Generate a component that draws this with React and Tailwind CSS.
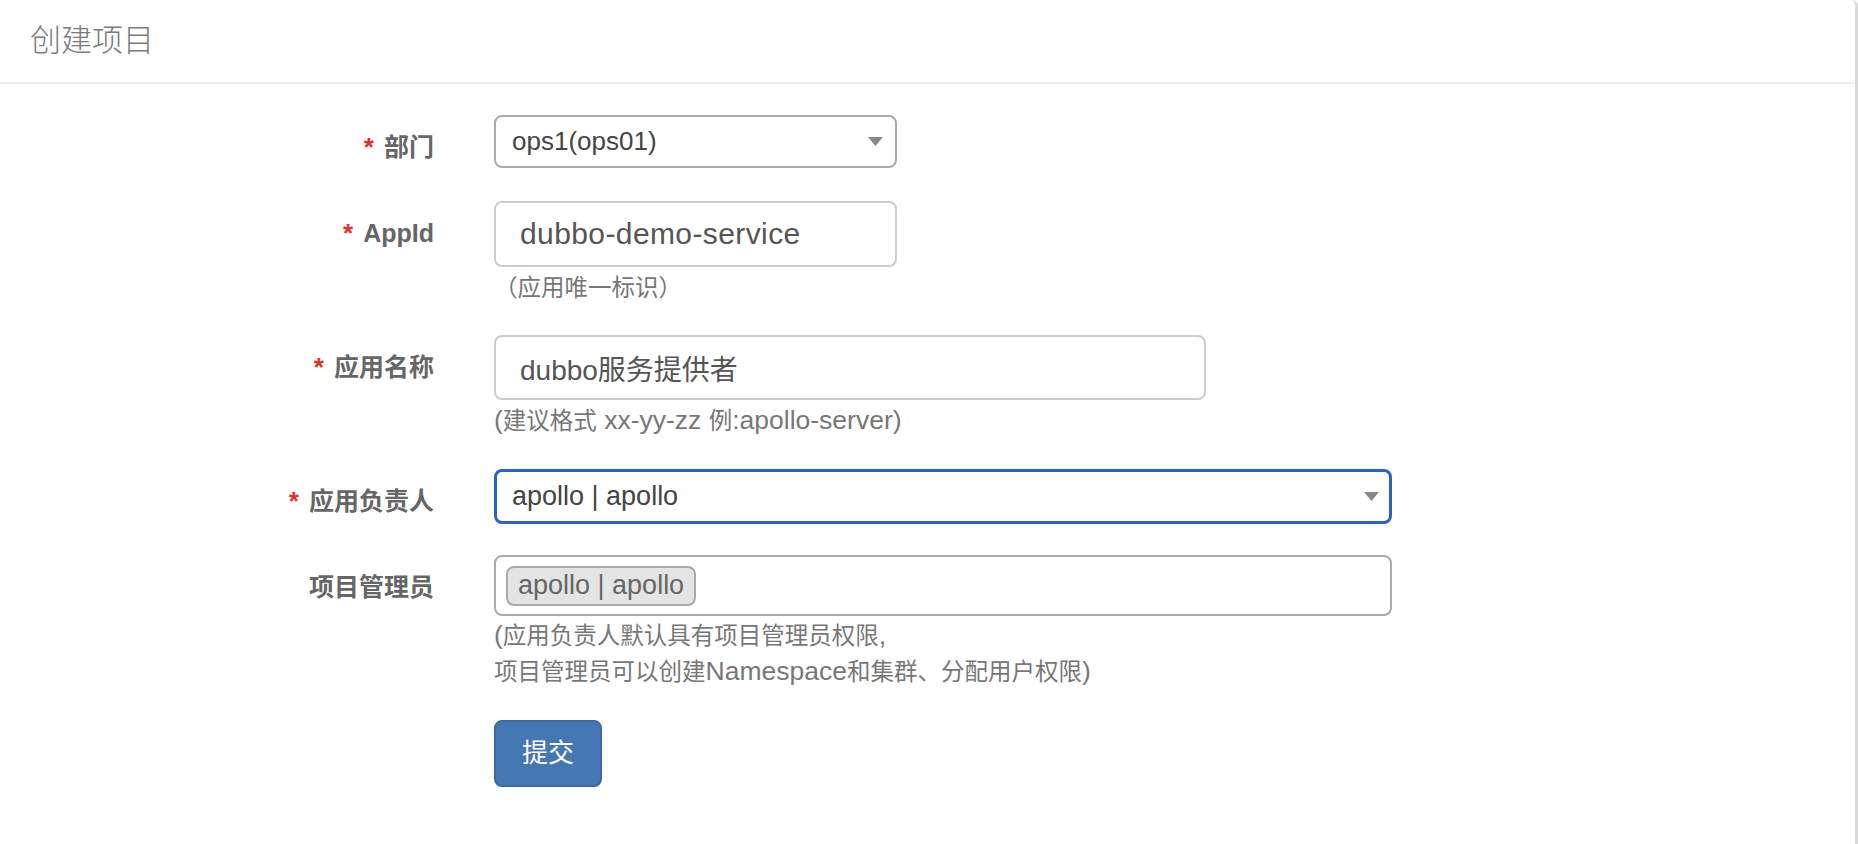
import React from 'react';

const Caret = ({ className }) => (
  <svg className={className} width="15" height="9" viewBox="0 0 15 9">
    <path d="M0 0 H15 L7.5 9 Z" fill="#888888" />
  </svg>
);

const Label = ({ required, children }) => (
  <div className="w-[434px] shrink-0 pt-[14px] text-right text-[25px] leading-[36px] font-bold text-[#666666]">
    {required && <span className="mr-[10px] text-[26px] font-bold text-[#e0302a]">*</span>}
    {children}
  </div>
);

const Hint = ({ children, className = '' }) => (
  <div className={`text-[23.5px] text-[#777777] ${className}`}>{children}</div>
);

// latin runs in the hints render a little wider in the original font
const L = ({ children }) => <span className="text-[26.5px] leading-none">{children}</span>;

const App = () => {
  return (
    <div className="min-h-screen bg-white border-r-[3px] border-[#dadada] rounded-tr-md font-['Liberation_Sans','Noto_Sans_CJK_SC',sans-serif]">
      {/* header */}
      <div className="h-[84px] border-b-2 border-[#eeeef3] pl-[30px] flex items-center">
        <h1 className="text-[31px] font-light text-[#7a7a7a]">创建项目</h1>
      </div>

      <form className="pt-[31px] flex flex-col" onSubmit={(e) => e.preventDefault()}>
        {/* 部门 */}
        <div className="flex">
          <Label required>部门</Label>
          <div className="ml-[60px]">
            <div className="w-[403px] h-[53px] border-2 border-[#aaaaaa] rounded-[8px] flex items-center justify-between pl-[16px] pr-[12px]">
              <span className="text-[26px] text-[#444444]">ops1(ops01)</span>
              <Caret />
            </div>
          </div>
        </div>

        {/* AppId */}
        <div className="flex mt-[33px]">
          <Label required>AppId</Label>
          <div className="ml-[60px]">
            <input
              readOnly
              value="dubbo-demo-service"
              className="w-[403px] h-[66px] border-2 border-[#cccccc] rounded-[8px] px-[24px] text-[30px] tracking-[0.4px] text-[#555555] outline-none"
            />
            <Hint className="mt-[4px] leading-[34px]">（应用唯一标识）</Hint>
          </div>
        </div>

        {/* 应用名称 */}
        <div className="flex mt-[30px]">
          <Label required>应用名称</Label>
          <div className="ml-[60px]">
            <input
              readOnly
              value="dubbo服务提供者"
              className="w-[712px] h-[65px] border-2 border-[#cccccc] rounded-[8px] px-[24px] text-[28px] text-[#555555] outline-none"
            />
            <Hint className="mt-[4px] leading-[34px]">
              <L>(</L>建议格式<L> xx-yy-zz </L>例<L>:apollo-server)</L>
            </Hint>
          </div>
        </div>

        {/* 应用负责人 */}
        <div className="flex mt-[31px]">
          <Label required>应用负责人</Label>
          <div className="ml-[60px]">
            <div className="w-[898px] h-[55px] border-[3px] border-[#2b62c6] rounded-[8px] flex items-center justify-between pl-[15px] pr-[10px]">
              <span className="text-[27px] text-[#444444]">apollo | apollo</span>
              <Caret />
            </div>
          </div>
        </div>

        {/* 项目管理员 */}
        <div className="flex mt-[31px]">
          <Label>项目管理员</Label>
          <div className="ml-[60px]">
            <div className="w-[898px] h-[61px] border-2 border-[#aaaaaa] rounded-[8px] flex items-center pl-[10px]">
              <span className="h-[40px] px-[10px] flex items-center bg-[#e4e4e4] border-2 border-[#aaaaaa] rounded-[8px] text-[27px] text-[#666666]">
                apollo | apollo
              </span>
            </div>
            <Hint className="mt-[2px] leading-[36px]">
              <L>(</L>应用负责人默认具有项目管理员权限<L>,</L>
              <br />
              项目管理员可以创建<L>Namespace</L>和集群、分配用户权限<L>)</L>
            </Hint>
          </div>
        </div>

        {/* submit */}
        <div className="flex mt-[30px] pb-[40px]">
          <div className="w-[434px] shrink-0"></div>
          <div className="ml-[60px]">
            <button
              type="submit"
              className="w-[108px] h-[67px] bg-[#4577b2] border-2 border-[#386ba3] rounded-[8px] text-white text-[26px]"
            >
              提交
            </button>
          </div>
        </div>
      </form>
    </div>
  );
};

export default App;
